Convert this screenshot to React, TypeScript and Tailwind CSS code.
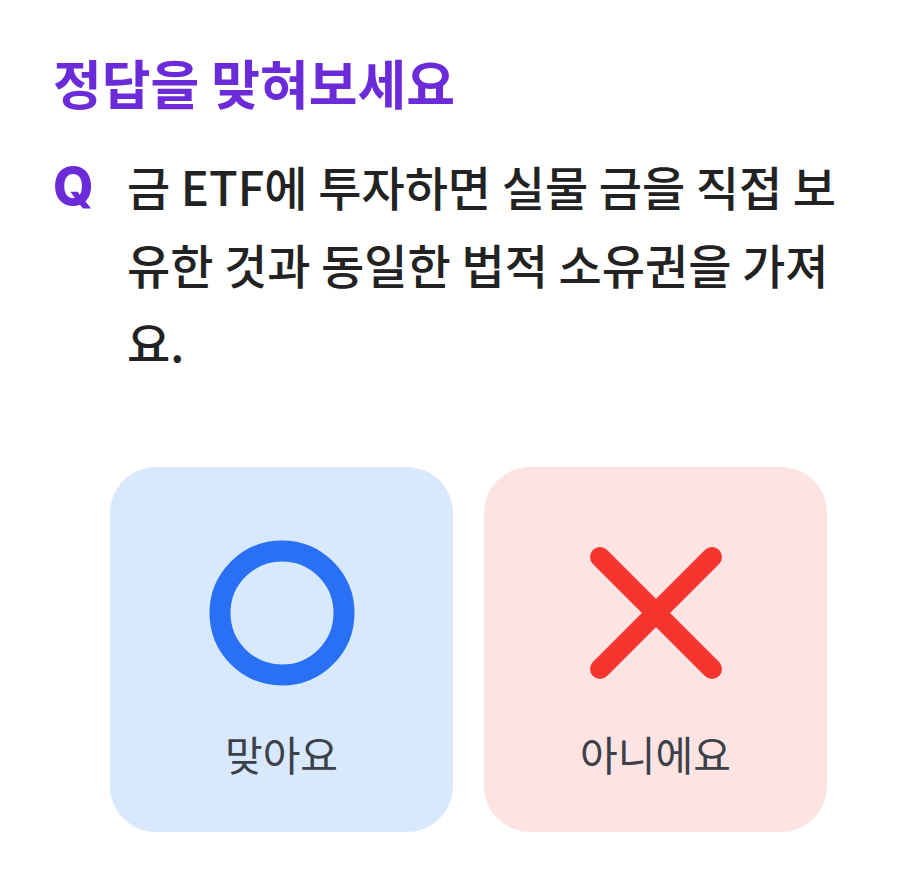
import React from 'react';

function Choice({ kind, label }: { kind: 'o' | 'x'; label: string }) {
  const isO = kind === 'o';
  return (
    <button
      className={
        'flex w-[343px] h-[365px] flex-col items-center rounded-[46px] pt-[73px] ' +
        (isO ? 'bg-[#d8e8fd]' : 'bg-[#fde3e2]')
      }
    >
      <svg width="146" height="146" viewBox="0 0 146 146">
        {isO ? (
          <circle cx="73" cy="73" r="62" fill="none" stroke="#2a70f5" strokeWidth="21" />
        ) : (
          <g stroke="#f4362f" strokeWidth="20" strokeLinecap="round">
            <line x1="17" y1="17" x2="129" y2="129" />
            <line x1="129" y1="17" x2="17" y2="129" />
          </g>
        )}
      </svg>
      <span className="mt-[43px] text-[41px] leading-[48px] text-[#3b4049]">{label}</span>
    </button>
  );
}

export default function App() {
  return (
    <div className="min-h-screen bg-white pl-[53px] pr-[40px] pt-[50px] font-['Noto_Sans_CJK_KR',sans-serif]">
      <h1 className="text-[53px] font-bold leading-[64px] text-[#6b2bd8]">정답을 맞혀보세요</h1>

      <div className="mt-[33px] flex">
        <span className="w-[74px] shrink-0 pt-[1px] text-[52px] font-extrabold leading-[78px] text-[#6b2bd8] font-['Inter','Noto_Sans_CJK_KR',sans-serif]">
          Q
        </span>
        <p className="flex-1 text-[47px] font-medium leading-[78px] text-[#222222]">
          금 ETF에 투자하면 실물 금을 직접 보유한 것과 동일한 법적 소유권을 가져요.
        </p>
      </div>

      <div className="mt-[86px] flex gap-[31px] pl-[57px]">
        <Choice kind="o" label="맞아요" />
        <Choice kind="x" label="아니에요" />
      </div>
    </div>
  );
}
